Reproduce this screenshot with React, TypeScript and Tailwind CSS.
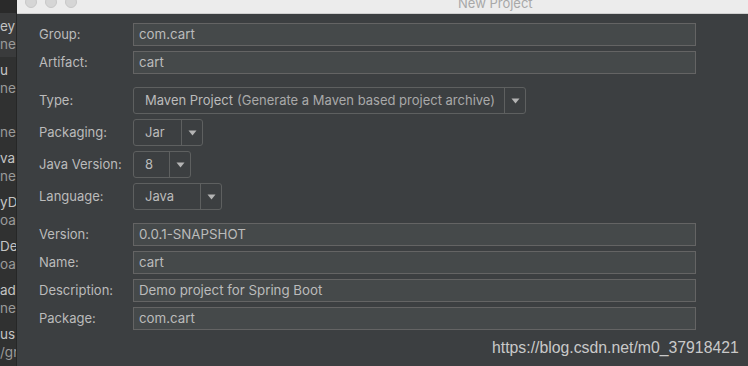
const stripItems = [
  { title: 'ey', sub: 'nen', active: true },
  { title: 'u', sub: 'nen' },
  { title: '', sub: 'nen' },
  { title: 'va', sub: 'nen' },
  { title: 'yD', sub: 'oad' },
  { title: 'De', sub: 'oad' },
  { title: 'ade', sub: 'nen' },
  { title: 'us', sub: '/gr' },
];

function Arrow() {
  return (
    <svg width="9" height="6" viewBox="0 0 9 6" className="block">
      <path d="M0.5 0.5h8L4.5 5.5z" fill="#b4b4b4" />
    </svg>
  );
}

function Label({ children }: { children: React.ReactNode }) {
  return <div className="w-[94px] shrink-0 text-[13px] text-[#bbbbbb]">{children}</div>;
}

function TextRow({ label, value }: { label: string; value: string }) {
  return (
    <div className="flex items-center h-[23px]">
      <Label>{label}</Label>
      <div className="w-[563px] h-[23px] border border-[#646464] bg-[#45494a] flex items-center pl-[5px] text-[13.3px] text-[#bbbbbb]">
        {value}
      </div>
    </div>
  );
}

function SelectRow({ label, value, hint, width }: { label: string; value: string; hint?: string; width: string }) {
  return (
    <div className="flex items-center h-[27px]">
      <Label>{label}</Label>
      <div className={`${width} h-[27px] border border-[#5e6060] rounded-[3px] bg-[#3c3f41] flex items-stretch text-[13px] text-[#bbbbbb]`}>
        <div className="flex-1 flex items-center pl-[11px] whitespace-nowrap">
          {value}
          {hint && <span className="ml-[4px] text-[#a9a9a9]">{hint}</span>}
        </div>
        <div className="w-[21px] border-l border-[#5e6060] flex items-center justify-center">
          <Arrow />
        </div>
      </div>
    </div>
  );
}

export default function App() {
  return (
    <div className="w-[748px] h-[366px] flex overflow-hidden bg-[#3c3f41] relative" style={{ fontFamily: 'Inter, "Noto Sans", sans-serif' }}>
      {/* background window strip */}
      <div className="w-[17px] shrink-0 bg-[#303131] overflow-hidden border-r border-[#262727] text-[13.5px]">
        <div className="h-[13px] bg-[#2a2a2a]" />
        <div className="flex flex-col">
          {stripItems.map((it, i) => (
            <div key={i} className={`h-[44px] whitespace-nowrap leading-[18px] pt-[4px] ${i === 0 ? 'bg-[#3a3b3c]' : ''}`}>
              <div className="text-[#c4c4c4] h-[18px]">{it.title}</div>
              <div className="text-[#9a9a9a]">{it.sub}</div>
            </div>
          ))}
        </div>
      </div>

      {/* New Project dialog */}
      <div className="flex-1 flex flex-col">
        <div className="h-[14px] bg-[#ececec] border-b border-[#cfcfcf] relative overflow-hidden">
          <div className="flex gap-[8px] pl-[8px] -mt-[4px]">
            <div className="w-[12px] h-[12px] rounded-full bg-[#d6d6d6] border border-[#c8c8c8]" />
            <div className="w-[12px] h-[12px] rounded-full bg-[#d6d6d6] border border-[#c8c8c8]" />
            <div className="w-[12px] h-[12px] rounded-full bg-[#d6d6d6] border border-[#c8c8c8]" />
          </div>
          <div className="absolute left-[441px] -top-[6px] text-[13px] text-[#a8a8a8]">New Project</div>
        </div>

        <div className="pl-[22px] pt-[9px] flex flex-col">
          <div className="flex flex-col gap-[5px]">
            <TextRow label="Group:" value="com.cart" />
            <TextRow label="Artifact:" value="cart" />
          </div>

          <div className="flex flex-col gap-[5px] mt-[13px]">
            <SelectRow label="Type:" value="Maven Project" hint="(Generate a Maven based project archive)" width="w-[393px]" />
            <SelectRow label="Packaging:" value="Jar" width="w-[70px]" />
            <SelectRow label="Java Version:" value="8" width="w-[58px]" />
            <SelectRow label="Language:" value="Java" width="w-[89px]" />
          </div>

          <div className="flex flex-col gap-[5px] mt-[13px]">
            <TextRow label="Version:" value="0.0.1-SNAPSHOT" />
            <TextRow label="Name:" value="cart" />
            <TextRow label="Description:" value="Demo project for Spring Boot" />
            <TextRow label="Package:" value="com.cart" />
          </div>
        </div>
      </div>

      <div className="absolute left-[492px] top-[336px] text-[15.8px] text-[#c9c9c9]" style={{ fontFamily: '"Liberation Sans", Arial, sans-serif' }}>
        https://blog.csdn.net/m0_37918421
      </div>
    </div>
  );
}
